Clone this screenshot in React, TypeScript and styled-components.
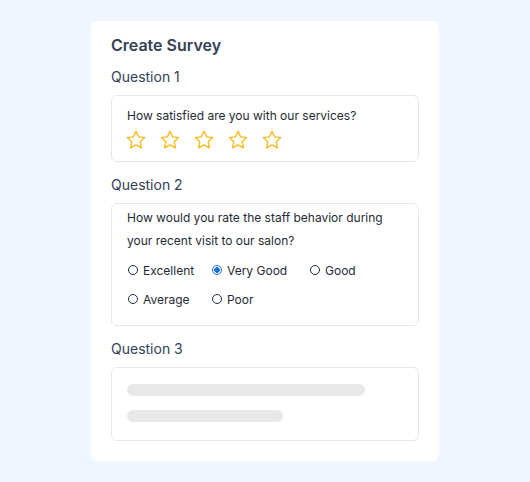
import React from 'react';
import styled, { createGlobalStyle, css } from 'styled-components';

const GlobalStyle = createGlobalStyle`
  html, body {
    margin: 0;
    padding: 0;
    background: #eff6ff;
  }
  body {
    font-family: Inter, 'Noto Sans', sans-serif;
  }
`;

const Page = styled.div`
  width: 530px;
  height: 482px;
  display: flex;
  justify-content: center;
  align-items: flex-start;
  padding-top: 21px;
  box-sizing: border-box;
`;

const Card = styled.div`
  width: 348px;
  box-sizing: border-box;
  background: #ffffff;
  border-radius: 6px;
  padding: 14px 20px 20px;
  display: flex;
  flex-direction: column;
`;

const Title = styled.h1`
  margin: 0;
  font-size: 16px;
  line-height: 20px;
  font-weight: 600;
  color: #334155;
`;

const Label = styled.div<{ first?: boolean }>`
  margin-top: ${({ first }) => (first ? '12px' : '13px')};
  margin-bottom: 8px;
  font-size: 14px;
  line-height: 20px;
  font-weight: 400;
  color: #334155;
`;

const Box = styled.div<{ pad: string }>`
  border: 1px solid #e2e8f0;
  border-radius: 6px;
  padding: ${({ pad }) => pad};
  display: flex;
  flex-direction: column;
`;

const QuestionText = styled.div<{ lh: number }>`
  font-size: 12px;
  line-height: ${({ lh }) => lh}px;
  color: #1f2937;
`;

const Stars = styled.div`
  display: flex;
  gap: 12px;
  margin-top: 3px;
  margin-left: -2px;
`;

const Options = styled.div`
  display: grid;
  grid-template-columns: 84px 98px auto;
  justify-content: start;
  row-gap: 9px;
  margin-top: 8px;
  margin-left: 1px;
`;

const Option = styled.label`
  display: flex;
  align-items: center;
  gap: 5px;
  height: 20px;
  font-size: 12px;
  color: #1f2937;
`;

const Radio = styled.span<{ checked?: boolean }>`
  width: 10px;
  height: 10px;
  border-radius: 50%;
  box-sizing: border-box;
  border: 1.3px solid #1f2937;
  ${({ checked }) =>
    checked &&
    css`
      border: 1.5px solid #1a6fe0;
      background: radial-gradient(circle, #1a6fe0 0 2.6px, #ffffff 3px);
    `}
`;

const Skeleton = styled.div<{ w: number; top?: number }>`
  width: ${({ w }) => w}px;
  height: 12px;
  border-radius: 6px;
  background: #e8e8e8;
  margin-top: ${({ top }) => top ?? 0}px;
`;

const Star = () => (
  <svg width="22" height="22" viewBox="0 0 24 24" fill="none" stroke="#f8bb1c" strokeWidth="1.5" strokeLinejoin="round">
    <path d="M12 2.5l2.9 6.1 6.6.8-4.9 4.6 1.3 6.6L12 17.3l-5.9 3.3 1.3-6.6-4.9-4.6 6.6-.8z" />
  </svg>
);

const options = [
  { label: 'Excellent' },
  { label: 'Very Good', checked: true },
  { label: 'Good' },
  { label: 'Average' },
  { label: 'Poor' },
];

const App = () => (
  <>
    <GlobalStyle />
    <Page>
      <Card>
        <Title>Create Survey</Title>
        <Label first>Question 1</Label>
        <Box pad="10px 15px">
          <QuestionText lh={20}>How satisfied are you with our services?</QuestionText>
          <Stars>
            {[0, 1, 2, 3, 4].map((i) => (
              <Star key={i} />
            ))}
          </Stars>
        </Box>
        <Label>Question 2</Label>
        <Box pad="2px 15px 16px">
          <QuestionText lh={23}>
            How would you rate the staff behavior during
            <br />
            your recent visit to our salon?
          </QuestionText>
          <Options>
            {options.map((o) => (
              <Option key={o.label}>
                <Radio checked={o.checked} />
                {o.label}
              </Option>
            ))}
          </Options>
        </Box>
        <Label>Question 3</Label>
        <Box pad="16px 15px 18px">
          <Skeleton w={238} />
          <Skeleton w={156} top={14} />
        </Box>
      </Card>
    </Page>
  </>
);

export default App;
